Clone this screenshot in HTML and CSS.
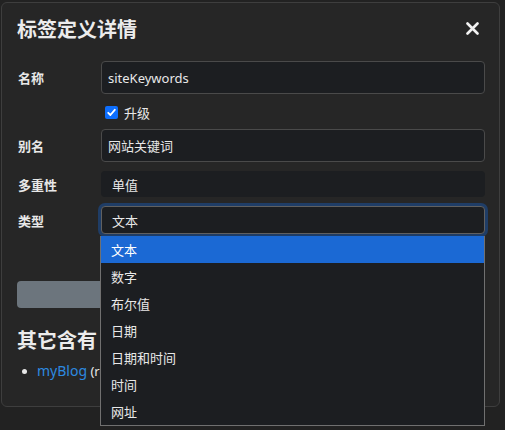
FILE: index.html
```html
<!DOCTYPE html>
<html lang="zh">
<head>
<meta charset="utf-8">
<link rel="stylesheet" href="styles.css">
</head>
<body>
<div class="page">
  <div class="modal">
    <div class="modal-header">
      <h1 class="title">标签定义详情</h1>
      <span class="close">
        <svg width="13" height="13" viewBox="0 0 13 13"><path d="M1.5 1.5 L11.5 11.5 M11.5 1.5 L1.5 11.5" stroke="#f2f2f2" stroke-width="2.6" stroke-linecap="round"/></svg>
      </span>
    </div>
    <div class="modal-body">
      <div class="row row-name">
        <label class="label">名称</label>
        <div class="input">siteKeywords</div>
      </div>
      <div class="row row-check">
        <span></span>
        <div class="check">
          <span class="box"><svg width="13" height="13" viewBox="0 0 13 13"><path d="M3.2 6.8 L5.4 9 L9.8 3.8" fill="none" stroke="#fff" stroke-width="1.8" stroke-linecap="round" stroke-linejoin="round"/></svg></span>
          <span>升级</span>
        </div>
      </div>
      <div class="row row-alias">
        <label class="label">别名</label>
        <div class="input">网站关键词</div>
      </div>
      <div class="row row-mult">
        <label class="label">多重性</label>
        <div class="static">单值</div>
      </div>
      <div class="row row-type">
        <label class="label">类型</label>
        <div class="select">文本</div>
      </div>
      <div class="btn">保存</div>
      <h2 class="subtitle">其它含有</h2>
      <ul class="list">
        <li><a class="link">myBlog</a> <span class="muted">(root)</span></li>
      </ul>
    </div>
  </div>
  <ul class="dropdown">
    <li class="opt selected">文本</li>
    <li class="opt">数字</li>
    <li class="opt">布尔值</li>
    <li class="opt">日期</li>
    <li class="opt">日期和时间</li>
    <li class="opt">时间</li>
    <li class="opt">网址</li>
  </ul>
</div>
</body>
</html>
```
FILE: styles.css
```css
* { box-sizing: border-box; }
html, body {
  margin: 0;
  padding: 0;
  background: #222222;
  width: 505px;
  height: 430px;
  overflow: hidden;
  font-family: "Noto Sans", "Noto Sans CJK SC", sans-serif;
  color: #e6e6e6;
}
.page {
  position: relative;
  width: 505px;
  height: 430px;
  padding-top: 2px;
  padding-left: 1px;
}
.modal {
  width: 499px;
  height: 405px;
  background: #262626;
  border: 1px solid #3e3e3e;
  border-radius: 6px;
  overflow: hidden;
}
.modal-header {
  display: flex;
  align-items: center;
  justify-content: space-between;
  padding: 13px 20px 0 15px;
  height: 41px;
}
.title {
  margin: 0;
  font-size: 20px;
  line-height: 28px;
  font-weight: 700;
  color: #ececec;
}
.close {
  display: flex;
  width: 13px;
  height: 13px;
  margin-top: -4px;
}
.modal-body {
  padding: 0 14px 0 15px;
  display: flex;
  flex-direction: column;
}
.row {
  display: grid;
  grid-template-columns: 84px 1fr;
  align-items: center;
}
.label {
  font-size: 13px;
  font-weight: 700;
  color: #e8e8e8;
  padding-left: 1px;
}
.row-name { margin-top: 17px; }
.input {
  height: 33px;
  background: #1c1e21;
  border: 1px solid #4a4a4a;
  border-radius: 4px;
  font-size: 13px;
  color: #e8e8e8;
  padding: 0 6px;
  display: flex;
  align-items: center;
}
.row-check { margin-top: 9px; height: 14px; }
.check {
  display: flex;
  align-items: center;
  gap: 6px;
  font-size: 13px;
  padding-left: 4px;
  color: #e8e8e8;
}
.box {
  width: 13px;
  height: 13px;
  border-radius: 2px;
  background: #0d6efd;
  display: flex;
}
.row-alias { margin-top: 12px; }
.row-mult { margin-top: 9px; }
.static {
  height: 26px;
  background: #1c1e21;
  border-radius: 4px;
  font-size: 13px;
  padding: 0 11px;
  display: flex;
  align-items: center;
  color: #e8e8e8;
}
.row-type { margin-top: 9px; }
.select {
  height: 28px;
  background: #1c1e21;
  border: 1px solid #606060;
  border-radius: 4px;
  box-shadow: 0 0 0 3px #1f3d66;
  font-size: 13px;
  padding: 0 10px;
  display: flex;
  align-items: center;
  color: #e8e8e8;
}
.btn {
  margin-top: 47px;
  height: 27px;
  background: #6c757d;
  border-radius: 4px;
  color: #fff;
  font-size: 13px;
  display: flex;
  align-items: center;
  justify-content: center;
}
.subtitle {
  margin: 21px 0 0 0;
  font-size: 20px;
  line-height: 24px;
  font-weight: 700;
  color: #ececec;
}
.list {
  list-style: none;
  margin: 9px 0 0 0;
  padding: 0 0 0 20px;
  font-size: 13px;
  line-height: 18px;
}
.list li { position: relative; }
.list li::before {
  content: "";
  position: absolute;
  left: -15px;
  top: 7px;
  width: 5px;
  height: 5px;
  border-radius: 50%;
  background: #e6e6e6;
}
.link { color: #2d8ae0; font-size: 14px; }
.muted { color: #e6e6e6; }
.dropdown {
  position: absolute;
  left: 100px;
  top: 236px;
  width: 385px;
  margin: 0;
  padding: 0;
  list-style: none;
  background: #1c1e21;
  border: 1px solid #707070;
  border-top: 0;
}
.opt {
  height: 27px;
  display: flex;
  align-items: center;
  padding-left: 10px;
  font-size: 13px;
  color: #e8e8e8;
}
.opt.selected {
  background: #1b69d4;
  color: #fff;
}
```
